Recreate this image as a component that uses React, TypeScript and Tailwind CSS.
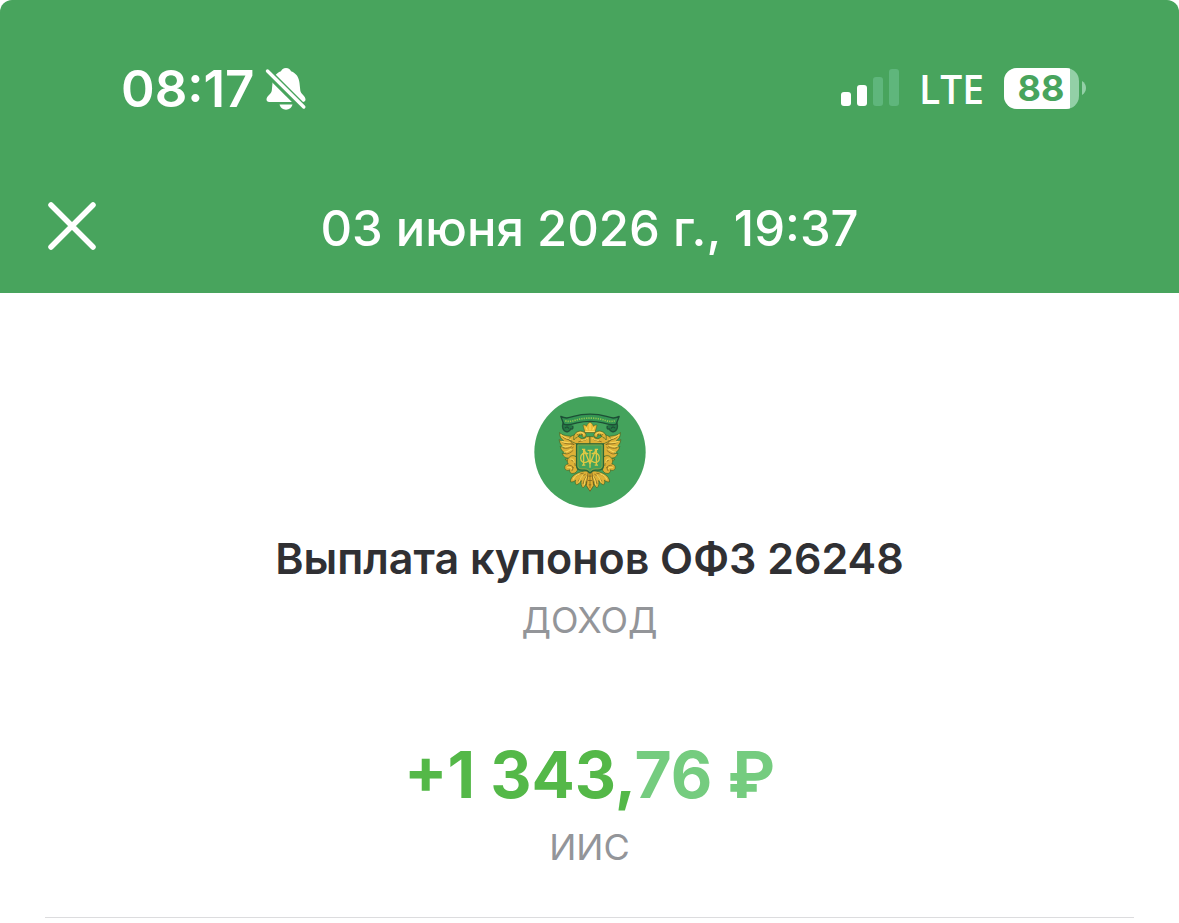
function BellOffIcon() {
  return (
    <svg viewBox="0 0 42 44" className="h-11 w-[42px]" fill="none" aria-hidden="true">
      <path
        d="M21 2c-2.700 0-4.300 1.300-5 3.200C10.500 7.200 8 11.500 7.500 17l-.7 7.500C6.400 28 1.500 30 1.500 33.500c0 1.500 1 2.500 2.700 2.500h33.600c1.700 0 2.700-1 2.700-2.500 0-3.500-4.700-5.500-5.200-9L34.500 17C34 11.500 31.500 7.200 26 5.200 25.300 3.300 23.700 2 21 2Z"
        fill="#fff"
      />
      <path d="M14.500 38.500h13c-.8 3-3.200 5.200-6.500 5.200s-5.700-2.200-6.500-5.200Z" fill="#fff" />
      <path d="M1 4.500 37.500 41" stroke="#48a45d" strokeWidth="8" />
      <path d="M2.500 5 38.800 41" stroke="#fff" strokeWidth="3.400" strokeLinecap="round" />
    </svg>
  );
}

function SignalIcon() {
  return (
    <svg viewBox="0 0 58 38" className="h-[38px] w-[58px]" role="img" aria-label="Сигнал">
      <rect x="0" y="23" width="10" height="14" rx="3" fill="#fff" />
      <rect x="16" y="16" width="10" height="21" rx="3" fill="#fff" />
      <rect x="32" y="8" width="10" height="29" rx="3" fill="#5fb67c" />
      <rect x="48" y="0" width="10" height="37" rx="3" fill="#5fb67c" />
    </svg>
  );
}

function Battery() {
  return (
    <div className="flex items-center gap-[3px]">
      <div className="flex h-[41px] w-[75px] items-center overflow-hidden rounded-[13px] bg-[#93d0a7]">
        <div className="flex h-full w-[66px] items-center justify-center bg-white pl-2 text-[36px] leading-none font-bold text-[#48a45d]">
          88
        </div>
      </div>
      <svg viewBox="0 0 4 14" className="h-3.5 w-1" aria-hidden="true">
        <path d="M0 0c2.500 1.500 4 4 4 7s-1.500 5.500-4 7Z" fill="#93d0a7" />
      </svg>
    </div>
  );
}

function EagleHalf() {
  return (
    <g>
      <g stroke="#3d6428" strokeWidth="2" fill="#deb137" strokeLinejoin="round">
        <path d="M187 248c-14 1-26 4-37 11-9 6-14 14-13 22 5 1 11-1 15-5-2 6-1 11 3 14 6-2 11-7 14-13-2 9 0 17 5 22 6-4 10-11 10-19 1 8 4 16 11 22v-54Z" />
        <path d="M160 164c-10-12-20-20-31-20-8-1-18-3-25-10 0 12 5 20 12 24-6 1-9 0-13-3 1 12 7 19 15 22-6 1-9 0-12-2 2 12 9 18 17 20-5 2-8 2-11 0 3 11 10 15 18 15-3 3-6 4-9 3 4 8 11 8 17 4l8-8 14-10Z" />
        <path d="M131 154c8-14 22-16 32-6 6 6 16 6 22-2h10v22h-40c-9-4-17-8-24-14Z" />
        <path d="M156 149c-4 1-7 3-9 7-2-10 0-18 8-23 10-6 24-4 28 6 1 6-3 10-8 9-3-1-4-4-3-7-5-2-11 2-16 8Z" />
        <path d="M153 206c-8-6-17-3-22 4-5 6-4 13-1 18-7 0-12 6-10 13 2 6 9 8 14 4-1 7 4 12 10 11 8 0 14-7 14-14l10-4c0-14-4-24-15-32Z" />
      </g>
      <g fill="none" stroke="#6d5a1d" strokeWidth="2">
        <path d="M112 145c8 9 17 10 28 13M113 163c9 5 17 5 27 5M115 180c9 2 17 1 26-4M122 198c9 0 15-4 23-11M126 149l22 22M131 166l17 4M136 185l10-8M148 268c8-7 16-11 28-13M160 280c4-9 11-16 22-22M174 288c2-10 6-18 12-26M139 216c8 3 12 10 12 18M130 232c7-2 13 2 16 8M140 249c4-4 5-8 3-13" />
        <path d="M160 162c6-3 16-3 26-8M156 139l5 4M168 138l6 3" />
      </g>
      <g fill="none" stroke="#f6d75c" strokeWidth="3" strokeLinecap="round">
        <path d="M109 141c8 8 19 8 29 15M111 160c7 5 18 3 25 5M112 174c9 4 18 2 26-2M119 193c8-1 14-5 21-10M165 257c-9 3-16 8-20 16M174 262c-7 6-11 13-12 20M186 264c-5 8-8 15-8 25M137 213c6-1 10 5 11 11M128 238c5-1 9-1 12 3M158 136c7-4 15-2 19 4M170 158c7-1 12-3 17-6" />
      </g>
      <circle cx="163" cy="141" r="2" fill="#2c5a2c" />
    </g>
  );
}

function Emblem() {
  return (
    <svg viewBox="28 25 334 334" className="size-28" role="img" aria-label="Министерство финансов">
      <circle cx="195" cy="192" r="166" fill="#44a35c" />
      <EagleHalf />
      <g transform="translate(390 0) scale(-1 1)">
        <EagleHalf />
      </g>
      <path d="M190 250h10l6 42-11 17-11-17Z" fill="#e0b032" stroke="#59491b" strokeWidth="2" />
      <path d="M190 264h10M189 277h12M191 290h8M195 258v42" stroke="#6d5a1d" strokeWidth="2" />
      <path
        d="M180 134 174 112c4-2 8 0 11 3 1-6 5-10 10-12 5 2 9 6 10 12 3-3 7-5 11-3l-6 22Z"
        fill="#edbb37"
        stroke="#55682a"
        strokeWidth="2"
        strokeLinejoin="round"
      />
      <path d="M181 131h28M195 107v20M183 119l4 8M207 119l-4 8" stroke="#f8df65" strokeWidth="3" />
      <path d="M155 168h80v65c0 9-6 13-15 13h-8c-9 0-13 4-17 9-4-5-8-9-17-9h-8c-9 0-15-4-15-13Z" fill="#44a35c" stroke="#2b6638" strokeWidth="4" />
      <path d="M159 171h72v62c0 6-4 9-12 9h-9c-7 0-12 4-15 8-3-4-8-8-15-8h-9c-8 0-12-3-12-9Z" fill="none" stroke="#a8a638" strokeWidth="2" />
      <g fill="none" stroke="#dfc944" strokeWidth="4">
        <path d="M176 184v46M214 184v46M171 184h10M209 184h10M171 231h10M209 231h10M178 186l17 42 17-42M195 187v52M188 187h14" />
        <path d="M190 198c-13-8-23 1-23 12s10 20 24 8M200 198c13-8 23 1 23 12s-10 20-24 8" />
      </g>
      <path d="M119 97c-6 10-9 22-1 31 6 7 18 3 19-5 8 2 8-4 6-9M271 97c6 10 9 22 1 31-6 7-18 3-19-5-8 2-8-4-6-9" fill="#257944" stroke="#205438" strokeWidth="4" />
      <path d="M120 121c5-7 10-3 12 1M270 121c-5-7-10-3-12 1" fill="none" stroke="#1d4934" strokeWidth="3" />
      <path d="M108 86c14 7 22 5 38 0 16-5 32-7 49-7s33 2 49 7c16 5 24 7 38 0l-9 23c-14 5-25 0-39-4-26-6-52-6-78 0-14 4-25 9-39 4Z" fill="#349553" stroke="#1d4f36" strokeWidth="4" strokeLinejoin="round" />
      <path d="M121 99c16 5 28-2 42-5 21-4 43-4 64 0 14 3 26 10 42 5" fill="none" stroke="#8cc451" strokeWidth="5" strokeDasharray="4 3" />
    </svg>
  );
}

export default function App() {
  return (
    <div className="min-h-screen bg-white font-['Inter',sans-serif]">
      <header className="rounded-t-xl bg-[#48a45d] pt-16 pb-[31px] text-white">
        <div className="flex h-12 items-center justify-between pr-[93px] pl-[121px]">
          <div className="flex items-center gap-2.5">
            <time className="text-[51px] leading-none font-semibold">08:17</time>
            <BellOffIcon />
          </div>
          <div className="flex items-center gap-5">
            <SignalIcon />
            <span className="font-['Open_Sans',sans-serif] text-[39px] leading-none font-semibold">LTE</span>
            <Battery />
          </div>
        </div>
        <div className="mt-[84px] grid grid-cols-[48px_1fr_48px] items-start px-12">
          <button type="button" aria-label="Закрыть" className="mt-1.5 size-12">
            <svg viewBox="0 0 48 48" className="size-12" fill="none" aria-hidden="true">
              <path d="m3 3 42 42M45 3 3 45" stroke="#fff" strokeWidth="5.500" strokeLinecap="round" />
            </svg>
          </button>
          <h1 className="text-center text-[49px] leading-[66px] font-medium">03 июня 2026 г., 19:37</h1>
        </div>
      </header>

      <main className="px-[45px] pt-[103px]">
        <section className="flex flex-col items-center text-center">
          <Emblem />
          <h2 className="mt-6 text-[43px] leading-[52px] font-semibold text-[#303033]">Выплата купонов ОФЗ 26248</h2>
          <p className="mt-2 text-4xl leading-[56px] text-[#939599]">ДОХОД</p>
          <p className="mt-[87px] text-[64px] leading-[80px] font-bold text-[#54b848]">
            +1 343,<span className="text-[#75cc7f]">76 ₽</span>
          </p>
          <p className="mt-2 text-4xl leading-[48px] text-[#939599]">ИИС</p>
        </section>
        <hr className="mt-[46px] border-[#dcdcde]" />
      </main>
    </div>
  );
}
